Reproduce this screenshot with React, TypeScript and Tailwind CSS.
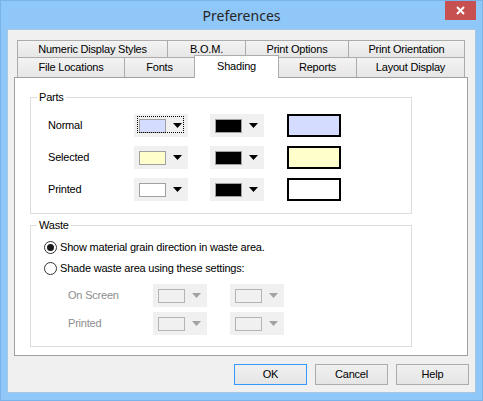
import type { ReactNode } from "react";

const font = { fontFamily: '"Liberation Sans", Arial, sans-serif', letterSpacing: "-0.2px" };

function Arrow({ disabled }: { disabled?: boolean }) {
  return (
    <svg width="9" height="5" viewBox="0 0 9 5" className="shrink-0">
      <path d="M0 0H9L4.5 5Z" fill={disabled ? "#a2a2a2" : "#000"} />
    </svg>
  );
}

function ColorCombo({
  swatch,
  focused,
  disabled,
}: {
  swatch?: string;
  focused?: boolean;
  disabled?: boolean;
}) {
  return (
    <div className="relative flex h-[23px] w-[54px] items-center bg-[#f0f0f0] pl-[5px]">
      <div
        className={
          disabled
            ? "h-[14px] w-[27px] border border-[#b4b4b4]"
            : "h-[14px] w-[27px] border border-[#a0a0a0]"
        }
        style={swatch ? { backgroundColor: swatch } : undefined}
      />
      <div className="ml-[7px] flex">
        <Arrow disabled={disabled} />
      </div>
      {focused && (
        <div className="pointer-events-none absolute bottom-[4px] left-[3px] right-[4px] top-[2px] border border-dotted border-black" />
      )}
    </div>
  );
}

function GroupBox({
  label,
  className,
  children,
}: {
  label: string;
  className: string;
  children: ReactNode;
}) {
  return (
    <div className={`flex flex-col border border-[#dcdcdc] ${className}`}>
      <div className="-mt-[7px] ml-[6px] w-fit bg-white px-[2px] text-[11px] leading-[13px] text-black">
        {label}
      </div>
      {children}
    </div>
  );
}

function Radio({ checked, label }: { checked?: boolean; label: string }) {
  return (
    <div className="flex h-[16px] items-center">
      <div className="flex h-[13px] w-[13px] items-center justify-center rounded-full border border-[#333] bg-white">
        {checked && <div className="h-[7px] w-[7px] rounded-full bg-[#1a1a1a]" />}
      </div>
      <span className="ml-[3px] text-[11px] leading-[13px] text-black">{label}</span>
    </div>
  );
}

const tabBase =
  "flex items-center justify-center border-l border-t border-[#acacac] bg-gradient-to-b from-[#f3f3f3] to-[#e6e6e6] text-[11px] text-black";

const partRows = [
  { label: "Normal", fill: "#d4dcff", focused: true },
  { label: "Selected", fill: "#ffffcc", focused: false },
  { label: "Printed", fill: "#ffffff", focused: false },
];

export default function App() {
  return (
    <div
      className="flex h-[401px] w-[483px] flex-col border border-[#79b3ea] bg-[#8fc7f8]"
      style={font}
    >
      {/* title bar */}
      <div className="flex h-[28px] shrink-0 items-start">
        <div className="flex-1" />
        <div
          className="mt-[5px] text-[14px] leading-[20px] tracking-normal text-[#262626]"
          style={{ fontFamily: '"Noto Sans", "Open Sans", sans-serif' }}
        >
          Preferences
        </div>
        <div className="flex flex-1 justify-end">
          <div className="mr-[6px] flex h-[19px] w-[31px] items-center justify-center bg-[#c75050]">
            <svg width="9" height="9" viewBox="0 0 9 9">
              <path d="M1 1L8 8M8 1L1 8" stroke="#fff" strokeWidth="2" />
            </svg>
          </div>
        </div>
      </div>

      {/* client area */}
      <div className="mx-[6px] flex h-[364px] flex-col border border-[#a6c6e4] bg-[#f0f0f0]">
        <div className="ml-[6px] mt-[10px] flex w-[454px] flex-col">
          {/* tab rows */}
          <div className="ml-[3px] flex h-[17px]">
            <div className={`${tabBase} w-[150px]`}>Numeric Display Styles</div>
            <div className={`${tabBase} w-[78px]`}>B.O.M.</div>
            <div className={`${tabBase} w-[103px]`}>Print Options</div>
            <div className={`${tabBase} w-[117px] border-r`}>Print Orientation</div>
          </div>
          <div className="relative z-10 ml-[3px] flex h-[20px] items-end">
            <div className={`${tabBase} h-[20px] w-[107px]`}>File Locations</div>
            <div className={`${tabBase} h-[20px] w-[70px]`}>Fonts</div>
            <div className="-mb-px flex h-[23px] w-[85px] items-start justify-center border-x border-t border-[#acacac] bg-white pt-[2px] text-[11px] text-black">
              Shading
            </div>
            <div className="flex h-[20px] w-[77px] items-center justify-center border-t border-[#acacac] bg-gradient-to-b from-[#f3f3f3] to-[#e6e6e6] text-[11px] text-black">
              Reports
            </div>
            <div className={`${tabBase} h-[20px] w-[109px] border-r`}>Layout Display</div>
          </div>

          {/* tab page */}
          <div className="flex h-[279px] flex-col border border-[#a0a0a0] bg-white pl-[15px]">
            <GroupBox label="Parts" className="mt-[19px] h-[117px] w-[382px]">
              <div className="ml-[17px] mt-[10px] grid grid-cols-[86px_76px_77px_54px] gap-y-[9px]">
                {partRows.map((r) => (
                  <div key={r.label} className="contents">
                    <div className="flex items-center text-[11px] text-black">{r.label}</div>
                    <ColorCombo swatch={r.fill} focused={r.focused} />
                    <ColorCombo swatch="#000000" />
                    <div
                      className="h-[23px] w-[54px] border-2 border-black"
                      style={{ backgroundColor: r.fill }}
                    />
                  </div>
                ))}
              </div>
            </GroupBox>

            <GroupBox label="Waste" className="mt-[11px] h-[122px] w-[382px]">
              <div className="ml-[13px] mt-[7px] flex flex-col gap-[5px]">
                <Radio checked label="Show material grain direction in waste area." />
                <Radio label="Shade waste area using these settings:" />
              </div>
              <div className="ml-[37px] mt-[8px] grid grid-cols-[85px_77px_54px] gap-y-[5px]">
                {["On Screen", "Printed"].map((l) => (
                  <div key={l} className="contents">
                    <div className="flex items-center text-[11px] text-[#8d8d8d]">{l}</div>
                    <ColorCombo disabled />
                    <ColorCombo disabled />
                  </div>
                ))}
              </div>
            </GroupBox>
          </div>
        </div>

        {/* buttons */}
        <div className="mt-[8px] flex justify-end gap-[8px] pr-[6px]">
          <button className="h-[21px] w-[73px] border border-[#3399ff] bg-gradient-to-b from-[#f0f0f0] to-[#e5e5e5] text-[11px] text-black">
            OK
          </button>
          <button className="h-[21px] w-[73px] border border-[#acacac] bg-gradient-to-b from-[#f0f0f0] to-[#e5e5e5] text-[11px] text-black">
            Cancel
          </button>
          <button className="h-[21px] w-[73px] border border-[#acacac] bg-gradient-to-b from-[#f0f0f0] to-[#e5e5e5] text-[11px] text-black">
            Help
          </button>
        </div>
      </div>
    </div>
  );
}
